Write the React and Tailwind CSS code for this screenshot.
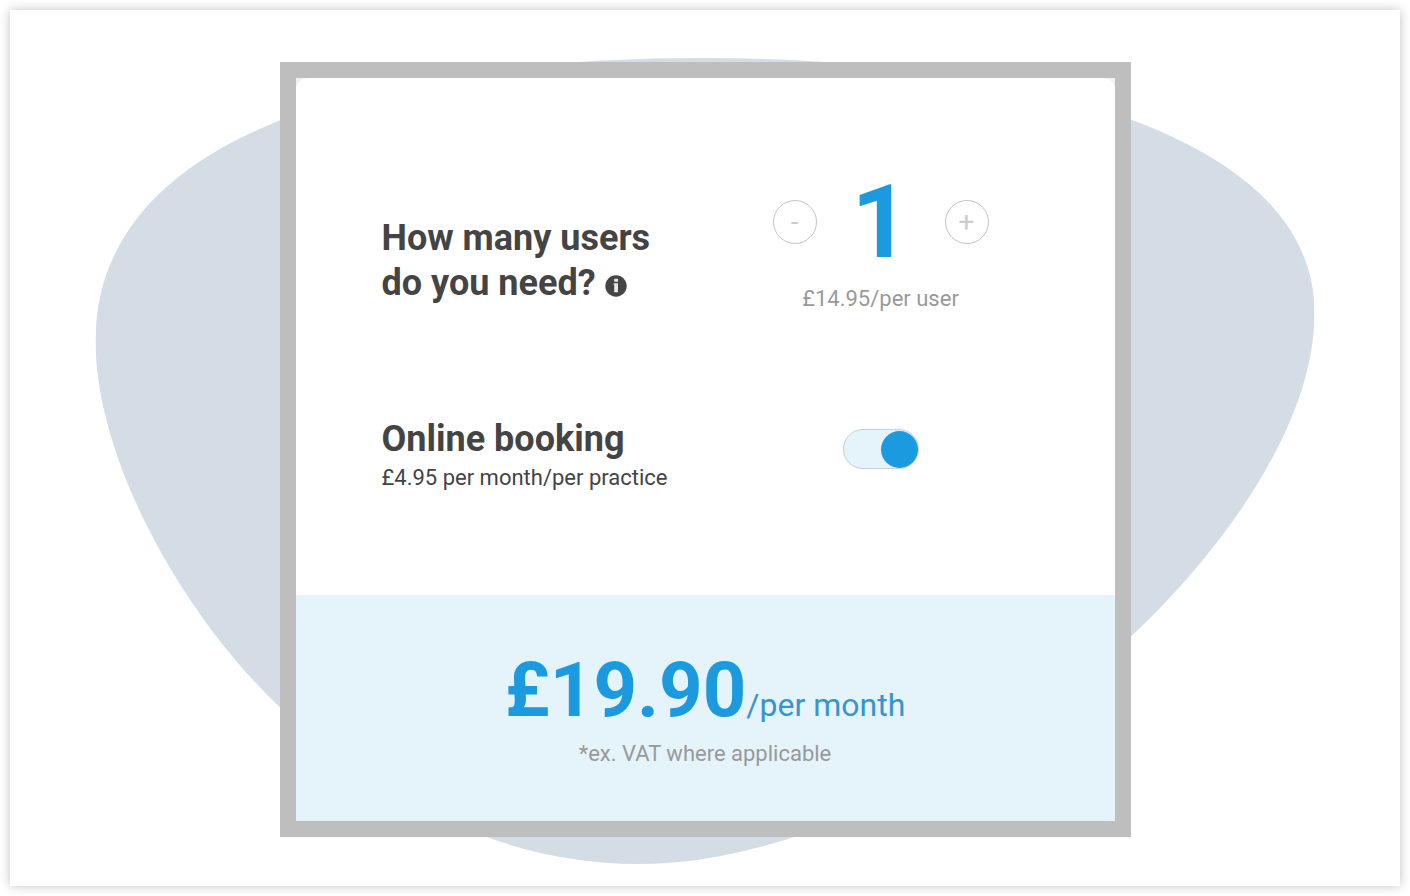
import React, { useState } from 'react';

const USER_PRICE = 14.95;
const BOOKING_PRICE = 4.95;

const InfoIcon = () => (
  <svg viewBox="0 0 22 22" className="inline-block size-[22px] align-[-2px]" aria-hidden="true">
    <circle cx="11" cy="11" r="10.7" fill="#444444" />
    <path d="M9.2 3.8h3.8v2.9H9.2zM8.6 8.2H13v9H9.2V9.6h-.6z" fill="#e6e6e6" />
  </svg>
);

const Blob = () => (
  <svg
    viewBox="96 58 1219 806"
    className="absolute top-12 left-1/2 w-[88%] max-w-[1219px] -translate-x-1/2"
    aria-hidden="true"
  >
    <path
      d="M96 341C96 140 360 58 704 58C1004 58 1315 128 1315 313C1315 426 1221 553 1131 637C1001 758 800 864 640 864C490 864 380 792 280 707C180 612 96 457 96 341Z"
      fill="#d4dce6"
    />
  </svg>
);

const StepButton = ({ label, onClick, children }) => (
  <button
    type="button"
    aria-label={label}
    onClick={onClick}
    className="flex size-11 items-center justify-center rounded-full border border-[#c4c4c4] bg-white text-[28px] text-[#cccccc]"
  >
    {children}
  </button>
);

const App = () => {
  const [users, setUsers] = useState(1);
  const [booking, setBooking] = useState(true);

  const total = users * USER_PRICE + (booking ? BOOKING_PRICE : 0);

  return (
    <div className="min-h-screen bg-white p-[10px] font-['Roboto',sans-serif] text-[#444444]">
      <main className="relative flex min-h-[876px] justify-center bg-white pt-[52px] pb-[49px] shadow-[0_0_10px_rgba(0,0,0,0.25)]">
        <Blob />

        <section className="relative flex w-full max-w-[851px] flex-col border-16 border-[#bebebe] bg-[#f2f2f2]">
          <div className="flex flex-1 flex-col gap-[103px] rounded-t-xl bg-white pt-[102px] pr-[126px] pb-[101px] pl-[86px]">
            {/* Number of users */}
            <div className="flex items-start justify-between">
              <h2 className="pt-9 text-4xl leading-[45px] font-bold">
                How many users
                <br />
                do you need? <InfoIcon />
              </h2>
              <div className="flex w-[216px] flex-col items-center">
                <div className="flex w-full items-center justify-between">
                  <StepButton label="Remove a user" onClick={() => setUsers(Math.max(1, users - 1))}>
                    -
                  </StepButton>
                  <output className="text-[102px] leading-[84px] font-bold text-[#1c9ae0]">{users}</output>
                  <StepButton label="Add a user" onClick={() => setUsers(users + 1)}>
                    +
                  </StepButton>
                </div>
                <p className="mt-5 text-[22px] leading-[30px] text-[#999999]">£{USER_PRICE}/per user</p>
              </div>
            </div>

            {/* Online booking */}
            <div className="flex items-start justify-between">
              <div>
                <h2 className="text-4xl leading-[45px] font-bold">
                  <label htmlFor="booking">Online booking</label>
                </h2>
                <p className="text-[22px] leading-8">£{BOOKING_PRICE} per month/per practice</p>
              </div>
              <div className="flex w-[216px] justify-center pt-3">
                <input
                  id="booking"
                  type="checkbox"
                  role="switch"
                  checked={booking}
                  onChange={(e) => setBooking(e.target.checked)}
                  className="flex h-10 w-[76px] cursor-pointer appearance-none items-center rounded-full border border-[#c6cfd4] bg-[#e5f4fb] before:size-[37px] before:shrink-0 before:rounded-full before:bg-[#1c9ae0] checked:justify-end"
                />
              </div>
            </div>
          </div>

          {/* Total */}
          <div className="bg-[#e5f4fb] pt-[51px] pb-[51px] text-center">
            <p className="text-[76px] leading-[88px] text-[#1c9ae0]">
              <strong className="font-bold">£{total.toFixed(2)}</strong>
              <span className="text-[32px] leading-none text-[#3a93cf]">/per month</span>
            </p>
            <p className="mt-1 text-[22px] leading-8 text-[#999999]">*ex. VAT where applicable</p>
          </div>
        </section>
      </main>
    </div>
  );
};

export default App;
